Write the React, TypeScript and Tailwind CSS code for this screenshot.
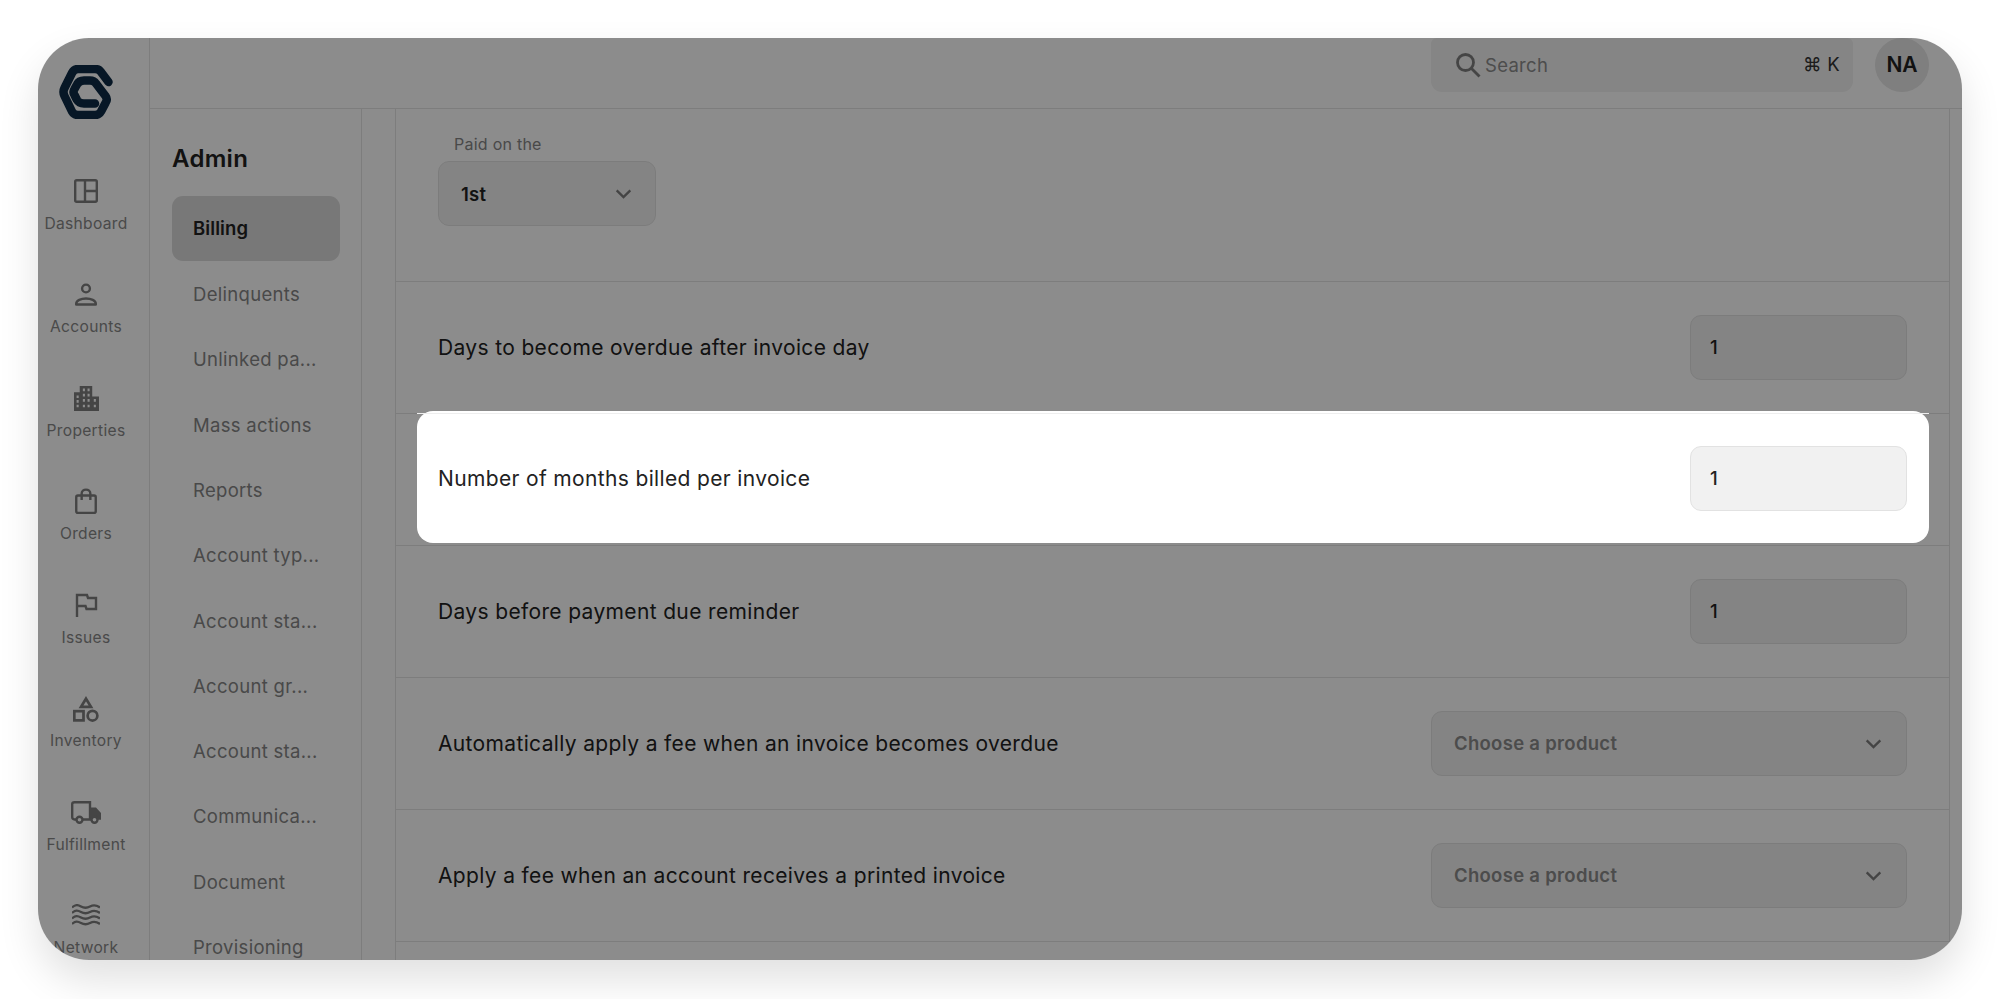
import React from "react";

const Ic = ({ children, w = 24, h = 24 }: { children: React.ReactNode; w?: number; h?: number }) => (
  <svg width={w} height={h} viewBox="0 0 24 24" fill="none" stroke="currentColor" strokeWidth="2.400">
    {children}
  </svg>
);

const rail = [
  {
    label: "Dashboard",
    icon: (
      <Ic>
        <rect x="1.200" y="1.200" width="21.600" height="21.600" rx="1.500" />
        <path d="M11 1v22M11 12h12" />
      </Ic>
    ),
  },
  {
    label: "Accounts",
    icon: (
      <Ic>
        <circle cx="12" cy="5.500" r="3.900" />
        <path d="M2.200 21.500v-.800C2.200 17.500 7 15.500 12 15.500s9.800 2 9.800 5.200v.800z" strokeLinejoin="round" />
      </Ic>
    ),
  },
  {
    label: "Properties",
    icon: (
      <svg width="25" height="25" viewBox="0 0 24 24" fill="currentColor">
        <path
          fillRule="evenodd"
          d="M5.500 0h12v10h6.500V24H0V6h5.500zM8.500 2.500v2.500h2V2.500zm4.500 0v2.500h2V2.500zM8.500 7.500v2.500h2V7.500zm4.500 0v2.500h2V7.500zM2.500 9v2.500h2V9zm0 4.500V16h2v-2.500zm6-1v2.500h2v-2.500zm4.500 0v2.500h2v-2.500zm6 0v2.500h2v-2.500zM2.500 18v2.500h2V18zm6 0v2.500h2V18zm4.500 0v2.500h2V18zm6 0v2.500h2V18z"
        />
      </svg>
    ),
  },
  {
    label: "Orders",
    icon: (
      <Ic w={26} h={27}>
        <rect x="3" y="6.500" width="18" height="16" rx="1.500" strokeWidth="2.200" />
        <path d="M8 10.500V4.500C8 2.500 9.800 1 12 1s4 1.500 4 3.500v6" strokeWidth="2.200" />
      </Ic>
    ),
  },
  {
    label: "Issues",
    icon: (
      <Ic>
        <path d="M3 24V2h10l1 3h8v11H12.500l-1-3H3" strokeLinejoin="miter" />
      </Ic>
    ),
  },
  {
    label: "Inventory",
    icon: (
      <Ic w={26} h={26}>
        <path d="M12 2.500l4.600 7.500h-9.200z" strokeWidth="2.500" />
        <rect x="1.200" y="14" width="8.500" height="8.500" strokeWidth="2.500" />
        <circle cx="18" cy="18.200" r="4.500" strokeWidth="2.500" />
      </Ic>
    ),
  },
  {
    label: "Fulfillment",
    icon: (
      <svg width="31" height="23" viewBox="0 0 31 23" fill="none" stroke="currentColor" strokeWidth="2.400">
        <path d="M6 18.500H3.500C2 18.500 1.200 17.500 1.200 16V3C1.200 1.800 2 1.200 3.500 1.200h15.500v17.300h-7" />
        <path d="M19.500 6.500h5.500l5 5.500v6.800h-3.500v-1h-7z" fill="currentColor" stroke="none" />
        <circle cx="8.500" cy="18.800" r="3" fill="#fff" />
        <circle cx="23.500" cy="18.800" r="3" fill="#fff" />
      </svg>
    ),
  },
  {
    label: "Network",
    icon: (
      <svg width="28" height="23" viewBox="0 0 28 23" fill="none" stroke="currentColor" strokeWidth="2.300">
        <path d="M0 3.500c3.500-3 5.500-3 9-1s5.500 2 9 0 6-2 10 1" />
        <path d="M0 9c3.500-3 5.500-3 9-1s5.500 2 9 0 6-2 10 1" />
        <path d="M0 14.500c3.500-3 5.500-3 9-1s5.500 2 9 0 6-2 10 1" />
        <path d="M0 20c3.500-3 5.500-3 9-1s5.500 2 9 0 6-2 10 1" />
      </svg>
    ),
  },
];

const adminLinks = [
  "Billing",
  "Delinquents",
  "Unlinked pa...",
  "Mass actions",
  "Reports",
  "Account typ...",
  "Account sta...",
  "Account gr...",
  "Account sta...",
  "Communica...",
  "Document",
  "Provisioning",
];

const Chevron = () => (
  <svg width="17" height="10" viewBox="0 0 18 11" fill="none" stroke="currentColor" strokeWidth="2.600" className="text-[#7d7d7d]">
    <path d="M1.500 1.500L9 9l7.500-7.500" />
  </svg>
);

const NumberBox = () => (
  <div className="flex h-[65px] w-[217px] items-center rounded-[11px] border border-[#e2e2e2] bg-[#f1f1f1] px-[19px] pt-[1px] text-[18.500px] font-medium text-[#222]">
    1
  </div>
);

const ProductBox = () => (
  <div className="flex h-[65px] w-[476px] items-center justify-between rounded-[11px] border border-[#e2e2e2] bg-[#f1f1f1] pl-[22px] pr-[24px] text-[18.500px] font-semibold tracking-[0.3px] text-[#8a8a8a]">
    <span className="pt-[1px]">Choose a product</span>
    <Chevron />
  </div>
);

const Row = ({ label, children }: { label: string; children: React.ReactNode }) => (
  <div className="flex h-[132px] items-center justify-between border-t border-[#e4e4e4] pl-[42px] pr-[42px]">
    <span className="text-[21px] tracking-[0.35px] text-[#222]">{label}</span>
    {children}
  </div>
);

export default function App() {
  return (
    <div className="h-screen overflow-hidden bg-white p-[38px] [font-family:Inter,sans-serif]">
      <div className="relative flex h-[922px] overflow-hidden rounded-[51px] bg-white shadow-[0_20px_40px_rgba(0,0,0,0.12)]">
        {/* icon rail */}
        <aside className="flex w-[112px] shrink-0 flex-col items-center overflow-hidden border-r border-[#e4e4e4] pr-[15px] pt-[27px] text-[#7e7e7e]">
          <svg width="54" height="54" viewBox="0 0 54 54" fill="none" stroke="#0d2b45" strokeWidth="8.500" strokeLinecap="round" strokeLinejoin="round" className="shrink-0">
            <path d="M36 38.500H25Q20 38.500 18 35L15.500 30Q13.500 27 15.500 24L18 19.500Q20 15.500 25 15.500H31Q35 15.500 37 18.500L46.500 31Q49 34.500 46.500 38L42 46.500Q40 50 36 50H19Q15 50 13 46.500L5.500 31Q3.500 27 5.500 23L13 8Q15 4 19 4H36Q40 4 42 7L49.500 17" />
          </svg>
          <nav className="mt-[59px] flex flex-col items-center gap-[34px]">
            {rail.map((item) => (
              <div key={item.label} className="flex h-[69.500px] w-[100px] shrink-0 flex-col items-center">
                <div className="flex h-[26px] items-center justify-center">{item.icon}</div>
                <span className="mt-[9.500px] text-[15.600px] leading-[20px] tracking-[0.3px] text-[#878787]">{item.label}</span>
              </div>
            ))}
          </nav>
        </aside>

        <div className="flex min-w-0 flex-1 flex-col">
          {/* top bar */}
          <header className="flex h-[71px] shrink-0 justify-end gap-[22px] border-b border-[#e4e4e4] pr-[33px]">
            <div className="flex h-[54px] w-[422px] items-center rounded-b-[11px] rounded-t-[6px] bg-[#f2f2f2] pl-[24px] pr-[13px] text-[#7e7e7e]">
              <svg width="26" height="26" viewBox="0 0 26 26" fill="none" stroke="currentColor" strokeWidth="2.800">
                <circle cx="10.500" cy="10.500" r="8" />
                <path d="M16.500 16.500L24.500 24.500" />
              </svg>
              <span className="ml-[4px] flex-1 pt-[1px] text-[18.500px] tracking-[0.3px] text-[#8c8c8c]">Search</span>
              <span className="text-[18.500px] tracking-[0.3px] text-[#333]">⌘ K</span>
            </div>
            <div className="flex h-[54px] w-[54px] items-center justify-center rounded-full bg-[#e7e7e7] text-[21px] font-semibold text-[#222]">
              NA
            </div>
          </header>

          <div className="flex min-h-0 flex-1">
            {/* admin menu */}
            <aside className="w-[212px] shrink-0 overflow-hidden border-r border-[#e4e4e4] pl-[22px] pr-[21px] pt-[34px]">
              <h2 className="text-[24px] font-semibold leading-[32px] tracking-[0.3px] text-[#222]">Admin</h2>
              <ul className="mt-[21px]">
                {adminLinks.map((name, i) => (
                  <li
                    key={name + i}
                    className={
                      i === 0
                        ? "flex h-[65.300px] items-center rounded-[11px] bg-[#dbdbdb] px-[21px] pt-[1px] text-[18.500px] font-semibold tracking-[0.1px] text-[#222]"
                        : "flex h-[65.300px] items-center whitespace-nowrap px-[21px] pt-[2px] text-[18.500px] tracking-[0.3px] text-[#868686]"
                    }
                  >
                    {name}
                  </li>
                ))}
              </ul>
            </aside>

            {/* settings */}
            <main className="ml-[33px] mr-[12px] min-w-0 flex-1 overflow-hidden border-x border-[#e4e4e4]">
              <div className="h-[172px] pl-[42px] pt-[23px]">
                <div className="pl-[16px] text-[16px] leading-[24px] tracking-[0.25px] text-[#868686]">Paid on the</div>
                <div className="mt-[5px] flex h-[65px] w-[218px] items-center justify-between rounded-[11px] border border-[#e2e2e2] bg-[#f1f1f1] pl-[22px] pr-[23px] text-[18.500px] font-semibold tracking-[0.2px] text-[#222]">
                  <span className="pt-[2px]">1st</span>
                  <Chevron />
                </div>
              </div>
              <Row label="Days to become overdue after invoice day">
                <NumberBox />
              </Row>
              <div className="relative h-[132px] border-t border-[#e4e4e4]">
                {/* tour spotlight, sits above the dim layer */}
                <div className="absolute -top-[3px] left-[21px] right-[20px] z-20 flex h-[132px] flex-col rounded-[16px] bg-white pt-[2px]">
                  <div className="flex flex-1 items-center justify-between border-t border-[#eeeeee] pl-[21px] pr-[22px]">
                    <span className="text-[21px] tracking-[0.35px] text-[#222]">Number of months billed per invoice</span>
                    <NumberBox />
                  </div>
                </div>
              </div>
              <Row label="Days before payment due reminder">
                <NumberBox />
              </Row>
              <Row label="Automatically apply a fee when an invoice becomes overdue">
                <ProductBox />
              </Row>
              <Row label="Apply a fee when an account receives a printed invoice">
                <ProductBox />
              </Row>
              <div className="h-[132px] border-t border-[#e4e4e4]" />
            </main>
          </div>
        </div>

        {/* dim layer */}
        <div className="pointer-events-none absolute inset-0 z-10 bg-black/45" />
      </div>
    </div>
  );
}
